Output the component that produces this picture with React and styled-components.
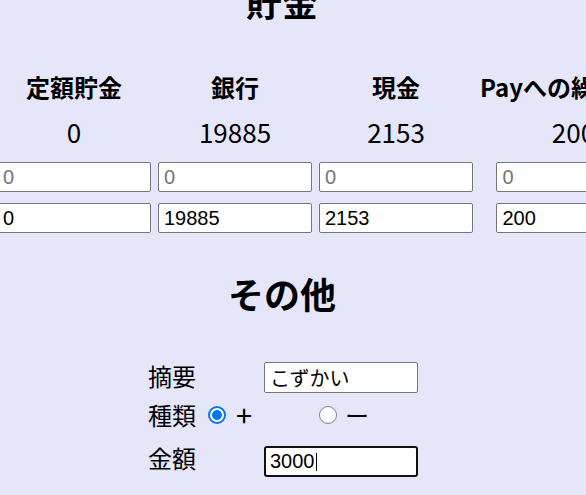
import React from "react";
import styled, { createGlobalStyle } from "styled-components";

const GlobalStyle = createGlobalStyle`
  html, body { margin: 0; padding: 0; overflow: hidden; background: #e6e6fa; }
  body { font-family: "Noto Sans CJK JP", "Noto Sans", sans-serif; color: #000; }
`;

const Viewport = styled.div`
  width: 586px;
  height: 495px;
  overflow: hidden;
  background: #e6e6fa;
`;

const Page = styled.div`
  width: 564px;
  margin-top: -19px;
  display: flex;
  flex-direction: column;
  align-items: center;
`;

const SectionTitle = styled.h1`
  margin: ${(p) => p.$top || 0}px 0 0;
  font-size: 36px;
  line-height: 40px;
  font-weight: 700;
`;

const SavingsGrid = styled.div`
  align-self: flex-start;
  margin: 49px 0 0 -3px;
  display: grid;
  grid-template-columns: repeat(3, 154px) max-content;
  column-gap: 7px;
  row-gap: 11px;
  justify-items: center;
  align-items: center;
`;

const ColHead = styled.div`
  font-size: 24px;
  font-weight: 700;
  line-height: 33px;
  white-space: nowrap;
`;

const Amount = styled.div`
  font-size: 26px;
  line-height: 35px;
  margin-bottom: 2px;
`;

const TextInput = styled.input`
  box-sizing: border-box;
  width: 154px;
  height: ${(p) => (p.$tall ? 31 : 30)}px;
  margin: 0;
  border: 1px solid #767676;
  border-radius: 2px;
  padding: 0 5px;
  background: #fff;
  color: #000;
  font: 20px "Liberation Sans", "Noto Sans CJK JP", sans-serif;
  outline: none;
  &::placeholder { color: #757575; }
`;

const Form = styled.div`
  align-self: flex-start;
  margin: 45px 0 0 148px;
  display: flex;
  flex-direction: column;
  gap: 10px;
`;

const Row = styled.div`
  display: flex;
  align-items: ${(p) => (p.$center ? "center" : "baseline")};
  height: 31px;
`;

const Label = styled.span`
  font-size: 24px;
  width: ${(p) => (p.$w ? `${p.$w}px` : "auto")};
  flex: none;
`;

const RadioGroup = styled.div`
  display: flex;
  align-items: center;
  margin-left: 12px;
`;

const Option = styled.label`
  display: inline-flex;
  align-items: center;
  gap: ${(p) => p.$gap}px;
  width: 111px;
  font-size: 24px;
  line-height: 31px;
`;

const Sign = styled.span`
  font-size: ${(p) => p.$size}px;
  line-height: 31px;
`;

const Radio = styled.input`
  appearance: none;
  box-sizing: border-box;
  width: 18px;
  height: 18px;
  margin: 0;
  border-radius: 50%;
  border: 1.5px solid #808080;
  background: #fff;
  &:checked {
    border: 2px solid #0075ff;
    background: radial-gradient(circle, #0075ff 0 4.6px, #fff 5.2px);
  }
`;

const FocusField = styled.div`
  box-sizing: border-box;
  width: 154px;
  height: 31px;
  border: 2px solid #101010;
  border-radius: 3px;
  background: #fff;
  padding: 0 4px;
  display: flex;
  align-items: center;
  font: 20px "Liberation Sans", "Noto Sans CJK JP", sans-serif;
`;

const Caret = styled.span`
  width: 1px;
  height: 18px;
  background: #000;
  margin-left: 1px;
`;

const accounts = [
  { name: "定額貯金", value: "0" },
  { name: "銀行", value: "19885" },
  { name: "現金", value: "2153" },
  { name: "Payへの繰越金額", value: "200" },
];

export default function App() {
  return (
    <Viewport>
      <GlobalStyle />
      <Page>
        <SectionTitle>貯金</SectionTitle>
        <SavingsGrid>
          {accounts.map((a) => (
            <ColHead key={"h" + a.name}>{a.name}</ColHead>
          ))}
          {accounts.map((a) => (
            <Amount key={"v" + a.name}>{a.value}</Amount>
          ))}
          {accounts.map((a) => (
            <TextInput key={"p" + a.name} placeholder="0" />
          ))}
          {accounts.map((a) => (
            <TextInput key={"i" + a.name} defaultValue={a.value} />
          ))}
        </SavingsGrid>
        <SectionTitle $top={40}>その他</SectionTitle>
        <Form>
          <Row>
            <Label $w={116}>摘要</Label>
            <TextInput $tall defaultValue="こずかい" />
          </Row>
          <Row $center>
            <Label>種類</Label>
            <RadioGroup>
              <Option $gap={10}>
                <Radio type="radio" name="kind" defaultChecked />
                <Sign $size={29}>+</Sign>
              </Option>
              <Option $gap={8}>
                <Radio type="radio" name="kind" />
                <Sign $size={24}>ー</Sign>
              </Option>
            </RadioGroup>
          </Row>
          <Row>
            <Label $w={116}>金額</Label>
            <FocusField>
              3000
              <Caret />
            </FocusField>
          </Row>
        </Form>
      </Page>
    </Viewport>
  );
}
